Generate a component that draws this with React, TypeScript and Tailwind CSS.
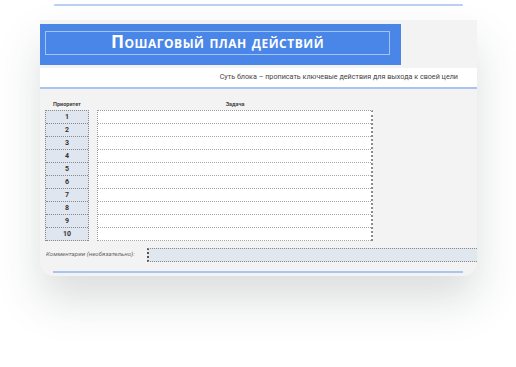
export default function App() {
  const rows = [1, 2, 3, 4, 5, 6, 7, 8, 9, 10]

  return (
    <div className="w-[516px] h-[367px] bg-white overflow-hidden font-['Roboto',sans-serif]">
      <div className="pt-[4px] pl-[54px]">
        <div className="w-[409px] h-[2px] bg-[#bcd0f4] rounded-full" />
      </div>

      <div className="ml-[40px] mt-[14px] w-[437px] h-[256px] bg-[#f3f3f3] rounded-b-[14px] shadow-[0_24px_44px_rgba(40,60,55,0.17)] overflow-hidden flex flex-col">
        {/* header */}
        <div className="flex pt-[4px]">
          <div className="w-[361px] h-[41px] bg-[#4a86e8] pl-[5px] pt-[7px]">
            <div className="w-[345px] h-[24px] border border-white/50 flex items-center justify-center">
              <span className="text-white font-bold text-[17.5px] [font-variant:small-caps] tracking-[0.5px] font-['Open_Sans',sans-serif] leading-none pb-[2px]">
                Пошаговый план действий
              </span>
            </div>
          </div>
        </div>

        <div className="mt-[3px] h-[21px] bg-white border-b-2 border-[#a9c4f2] flex items-center justify-end pr-[19px]">
          <span className="text-[7.2px] text-[#444]">
            Суть блока – прописать ключевые действия для выхода к своей цели
          </span>
        </div>

        {/* table */}
        <div className="flex pl-[5px] pt-[10px] gap-[8px]">
          <div className="w-[44px]">
            <div className="h-[11px] text-[5.5px] font-bold text-[#444] text-center leading-[11px]">Приоритет</div>
            <div className="border-t border-x border-dotted border-[#8a8a8a] bg-[#dfe6ef]">
              {rows.map((n) => (
                <div
                  key={n}
                  className="h-[13px] border-b border-dotted border-[#8a8a8a] flex items-center justify-center text-[7px] font-bold text-[#333]"
                >
                  {n}
                </div>
              ))}
            </div>
          </div>

          <div className="w-[276px]">
            <div className="h-[11px] text-[5.5px] font-bold text-[#444] text-center leading-[11px]">Задача</div>
            <div className="border-t border-l border-dotted border-[#9a9a9a] border-r-2 border-r-[#8a8a8a] bg-white">
              {rows.map((n) => (
                <div key={n} className="h-[13px] border-b border-dotted border-[#a6a6a6]" />
              ))}
            </div>
          </div>
        </div>

        <div className="flex items-center mt-[7px]">
          <span className="w-[107px] pl-[6px] text-[6.2px] italic text-[#666]">Комментарии (необязательно):</span>
          <div className="flex-1 h-[14px] bg-[#e0e7ef] border-y border-dotted border-[#8a8a8a] border-l-2 border-l-[#555]" />
        </div>

        <div className="mt-[9px] ml-[13px] w-[410px] h-[2px] bg-[#a9c4f2]" />
      </div>
    </div>
  )
}
